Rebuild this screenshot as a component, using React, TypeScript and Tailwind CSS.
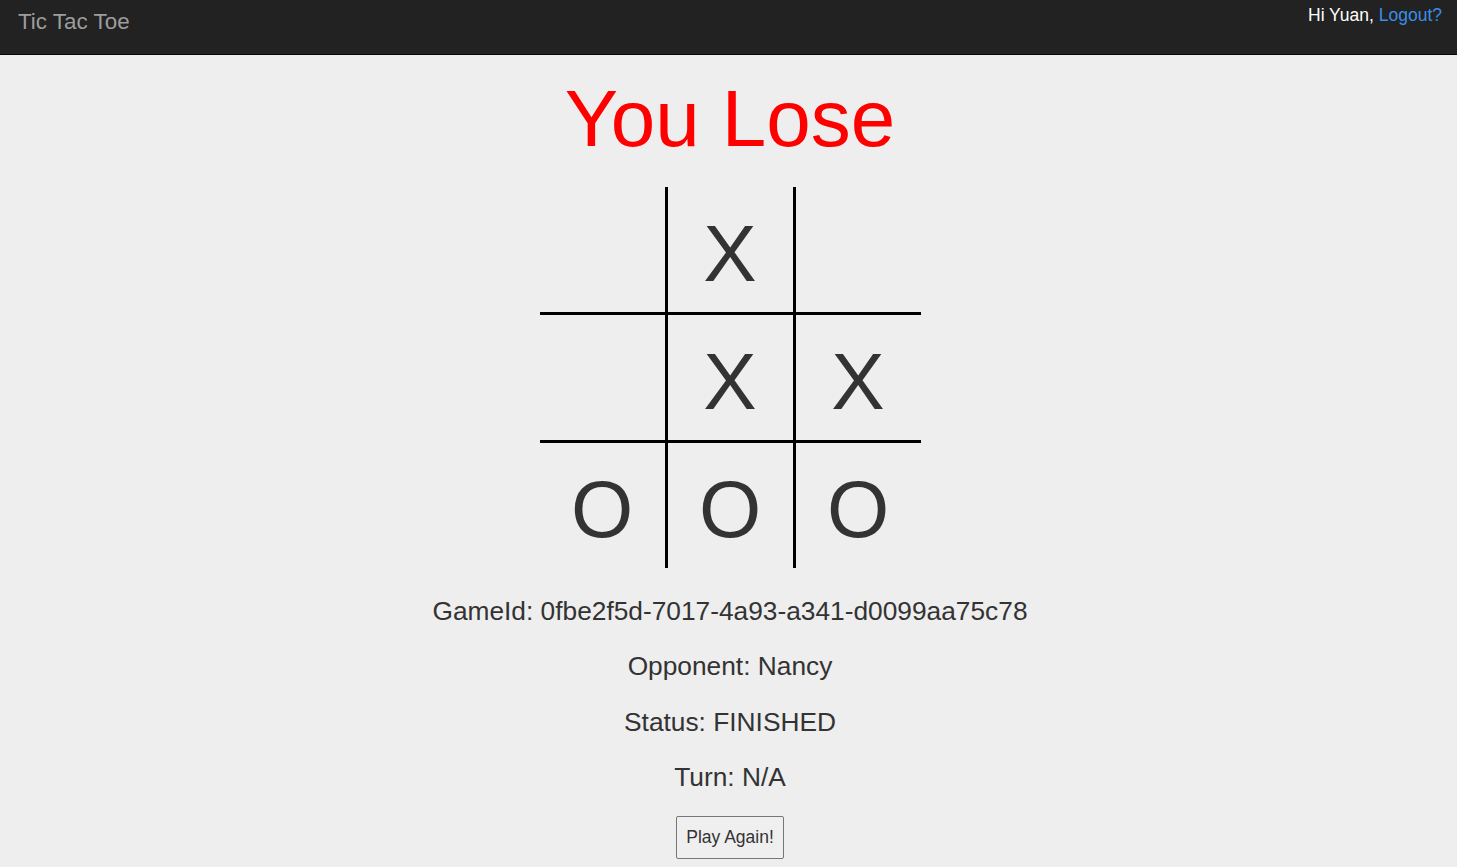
import React from 'react';

const board = ['', 'X', '', '', 'X', 'X', 'O', 'O', 'O'];

export default function App() {
  return (
    <div className="min-h-screen bg-[#eeeeee] text-[#333333]" style={{ fontFamily: '"Liberation Sans", Arial, sans-serif' }}>
      <nav className="h-[55px] bg-[#222222] border-b border-[#080808] flex justify-between">
        <div className="pl-[18px] pt-[9px] text-[22.4px] leading-[26px] text-[#9d9d9d]">Tic Tac Toe</div>
        <div className="pr-[15px] pt-[5px] text-[17.5px] leading-[20px]">
          <span className="text-white">Hi Yuan, </span>
          <a className="text-[#3a8ee6]" href="#">Logout?</a>
        </div>
      </nav>

      <div className="flex flex-col items-center pl-[3px]">
        <h1 className="mt-[18px] text-[80px] leading-[92px] text-[#ff0000]">You Lose</h1>

        <div className="mt-[22px] grid grid-cols-[128px_128px_125px] grid-rows-[128px_128px_125px]">
          {board.map((v, i) => {
            const col = i % 3;
            const row = Math.floor(i / 3);
            return (
              <div
                key={i}
                className={`flex items-center justify-center pt-[8px] text-[80px] leading-none ${col < 2 ? 'border-r-[3px] border-r-black' : ''} ${row < 2 ? 'border-b-[3px] border-b-black' : ''}`}
              >
                {v}
              </div>
            );
          })}
        </div>

        <div className="mt-[29px] flex flex-col items-center text-[26.3px] leading-[28px] gap-[27.3px]">
          <p>GameId: 0fbe2f5d-7017-4a93-a341-d0099aa75c78</p>
          <p>Opponent: Nancy</p>
          <p>Status: FINISHED</p>
          <p>Turn: N/A</p>
        </div>

        <button className="mt-[25px] w-[108px] h-[43px] border border-[#767676] rounded-[2px] bg-[#efefef] text-[17.5px] text-[#333333]">
          Play Again!
        </button>
      </div>
    </div>
  );
}
